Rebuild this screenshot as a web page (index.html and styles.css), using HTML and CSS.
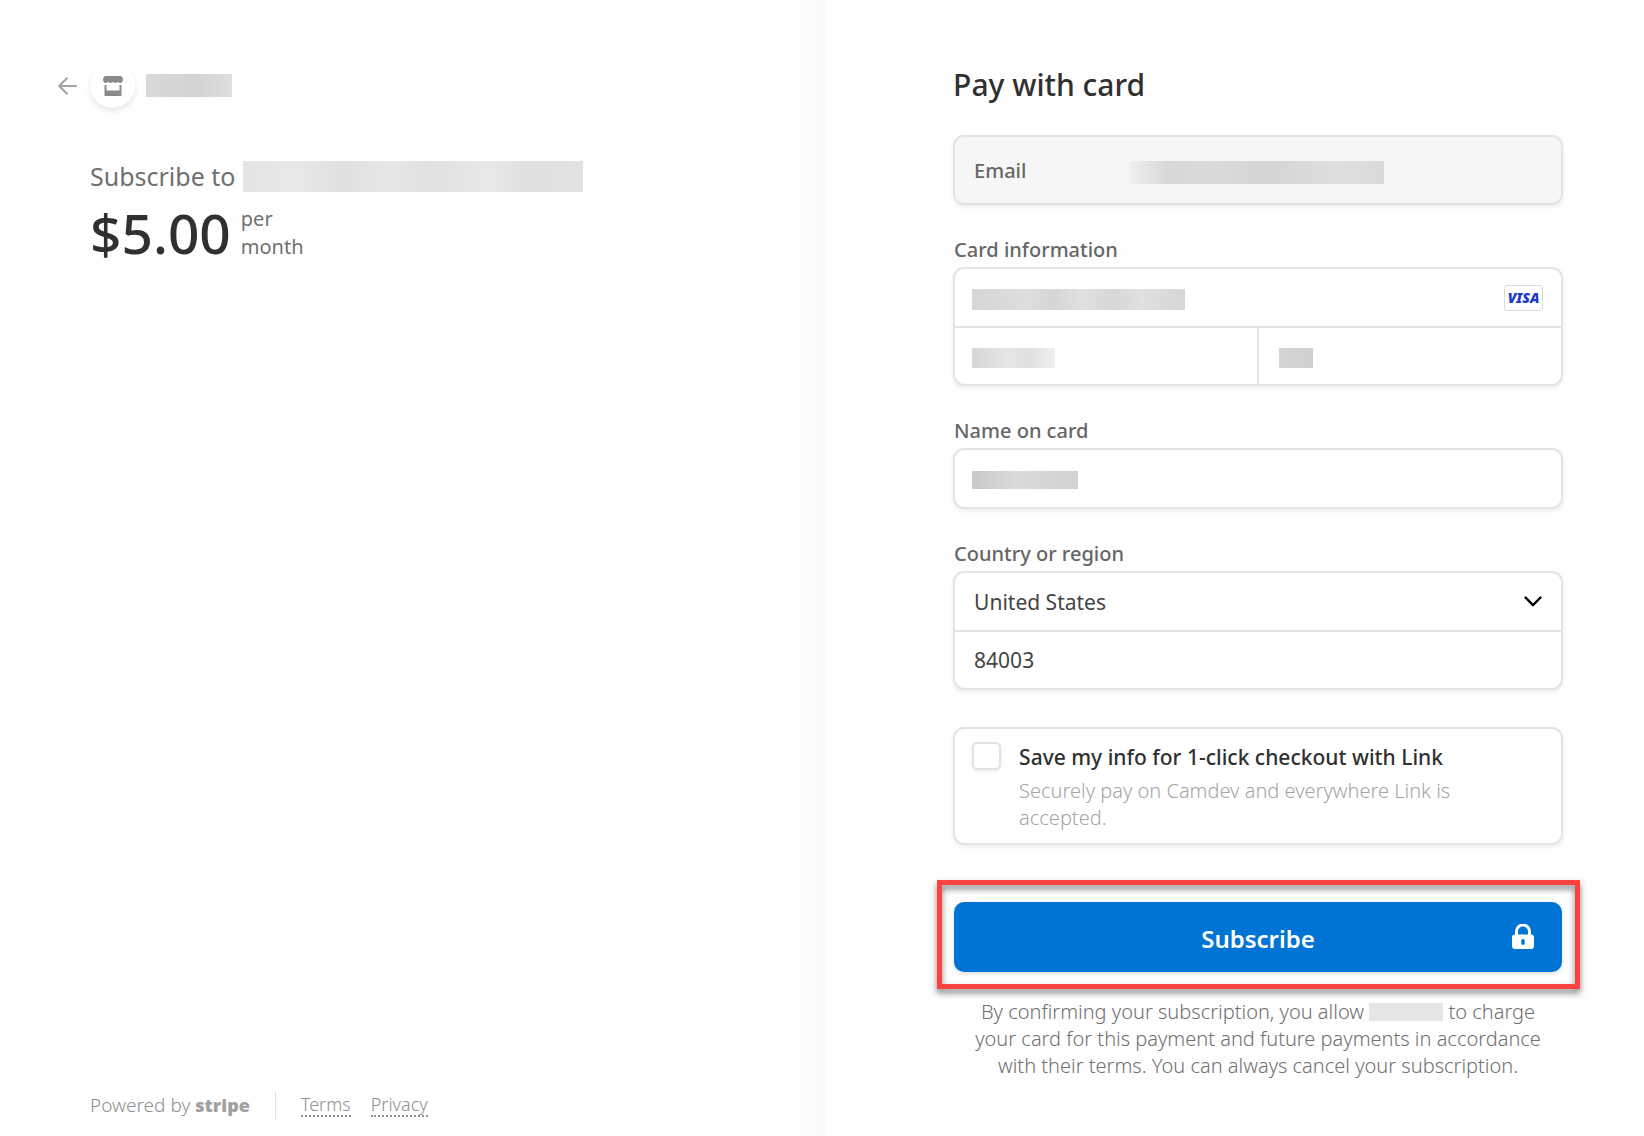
FILE: index.html
```html
<!DOCTYPE html>
<html lang="en">
<head>
  <meta charset="UTF-8" />
  <meta name="viewport" content="width=device-width, initial-scale=1.0"/>
  <title>Subscribe - Checkout</title>
  <link rel="stylesheet" href="styles.css">
</head>
<body>
  <div class="checkout">
    <section class="summary">
      <header class="business">
        <a class="back" href="#" aria-label="Back">
          <svg width="20" height="18" viewBox="0 0 20 18" fill="none" stroke="#a3a3a3" stroke-width="2" stroke-linecap="round" stroke-linejoin="round">
            <path d="M18 9H1.500M9 1.200L1.200 9L9 16.800"/>
          </svg>
        </a>
        <span class="store-icon">
          <svg width="20" height="20" viewBox="0 0 20 20" fill="#8a8a8a">
            <path d="M3 0h14c1.700 0 3 1.600 3 3.500S18.800 7 17.300 7c-1.300 0-1.900-.9-2.400-.9S13.800 7 12.500 7s-2-.9-2.500-.9S8.800 7 7.500 7s-1.900-.9-2.400-.9S4 7 2.700 7C1.200 7 0 5.400 0 3.500S1.300 0 3 0z"/>
            <path d="M1.500 9h2v5.500h13V9h2v11h-17z"/>
          </svg>
        </span>
        <span class="mask mask-business"></span>
      </header>

      <div class="product">
        <h1>Subscribe to <span class="mask mask-product"></span></h1>
        <div class="price">
          <span class="amount">$5.00</span>
          <span class="interval">per<br>month</span>
        </div>
      </div>

      <footer>
        <span class="powered">Powered by <strong>stripe</strong></span>
        <nav>
          <a href="#">Terms</a>
          <a href="#">Privacy</a>
        </nav>
      </footer>
    </section>

    <main class="payment">
      <form>
        <h2>Pay with card</h2>

        <div class="box email">
          <label for="email">Email</label>
          <input class="mask-email" id="email" type="email" readonly>
        </div>

        <div class="field">
          <label for="cardNumber">Card information</label>
          <div class="box">
            <div class="row">
              <input class="mask-number" id="cardNumber" type="text">
              <span class="visa">VISA</span>
            </div>
            <div class="row split">
              <input class="mask-expiry" type="text" aria-label="Expiration">
              <input class="mask-cvc" type="text" aria-label="CVC">
            </div>
          </div>
        </div>

        <div class="field">
          <label for="name">Name on card</label>
          <div class="box">
            <div class="row">
              <input class="mask-name" id="name" type="text">
            </div>
          </div>
        </div>

        <div class="field">
          <label for="country">Country or region</label>
          <div class="box">
            <div class="row">
              <select id="country">
                <option>United States</option>
              </select>
              <svg class="chevron" width="18" height="11" viewBox="0 0 18 11" fill="none" stroke="#000" stroke-width="2.400" stroke-linecap="round" stroke-linejoin="round">
                <path d="M1.500 1.500L9 9.200L16.500 1.500"/>
              </svg>
            </div>
            <div class="row">
              <input type="text" value="84003" aria-label="ZIP">
            </div>
          </div>
        </div>

        <div class="box save">
          <input id="saveInfo" type="checkbox">
          <div>
            <label for="saveInfo">Save my info for 1-click checkout with Link</label>
            <p>Securely pay on Camdev and everywhere Link is accepted.</p>
          </div>
        </div>

        <div class="submit">
          <button type="submit">
            Subscribe
            <svg class="lock" width="22" height="26" viewBox="0 0 22 26">
              <path d="M4.500 12V7.500a6.500 6.500 0 0 1 13 0V12" fill="none" stroke="#fff" stroke-width="3"/>
              <path fill="#fff" fill-rule="evenodd" d="M3 10.500h16a3 3 0 0 1 3 3V22a3 3 0 0 1-3 3H3a3 3 0 0 1-3-3v-8.500a3 3 0 0 1 3-3zM11 15a1.700 1.700 0 0 0-1.700 1.700v2.600a1.700 1.700 0 0 0 3.400 0v-2.600A1.700 1.700 0 0 0 11 15z"/>
            </svg>
          </button>
          <div class="highlight"></div>
        </div>

        <p class="terms">By confirming your subscription, you allow <span class="mask mask-terms"></span> to charge your card for this payment and future payments in accordance with their terms. You can always cancel your subscription.</p>
      </form>
    </main>
  </div>
</body>
</html>
```
FILE: styles.css
```css
html, body {
  margin: 0;
  padding: 0;
  height: 100%;
  font-family: "Noto Sans", "Open Sans", sans-serif;
  font-size: 20px;
  background: #fefefe;
  color: #303030;
}

* {
  box-sizing: border-box;
}

h1, h2, p {
  margin: 0;
}

.checkout {
  display: grid;
  grid-template-columns: minmax(0, 101fr) minmax(0, 100fr);
  min-height: 100vh;
}

/* left side */

.summary {
  display: flex;
  flex-direction: column;
  padding: 63px 30px 17px 90px;
  background: linear-gradient(to left, #fafafa, #fefefe 32px);
}

.business {
  display: flex;
  align-items: center;
  margin-left: -32px;
}

.back {
  display: flex;
  width: 32px;
}

.store-icon {
  display: flex;
  align-items: center;
  justify-content: center;
  width: 45px;
  height: 45px;
  margin-right: 11px;
  border-radius: 50%;
  background: #fff;
  box-shadow: 0 3px 5px rgba(60, 66, 87, 0.12);
}

.mask {
  display: inline-block;
  background: #dcdcdc;
}

.mask-business {
  width: 86px;
  height: 23px;
  background: linear-gradient(to right, #d9d9d9, #d3d3d3 60%, #dfdfdf);
}

.mask-product {
  width: 340px;
  height: 31px;
  background: linear-gradient(to right, #e4e4e4, #e8e8e8 15%, #e0e0e0 30%, #e7e7e7 43%, #e1e1e1 55%, #e8e8e8 73%, #e0e0e0 82%, #e2e2e2);
}

.product {
  margin-top: 51px;
}

.product h1 {
  display: flex;
  align-items: center;
  gap: 8px;
  font-size: 25px;
  line-height: 34px;
  font-weight: 400;
  color: #707070;
}

.price {
  display: flex;
  align-items: center;
  gap: 10px;
  margin-top: 10px;
}

.amount {
  font-size: 55px;
  line-height: 60px;
  font-weight: 500;
}

.interval {
  font-size: 20px;
  line-height: 28px;
  color: #707070;
}

footer {
  display: flex;
  align-items: center;
  margin-top: auto;
  font-size: 18px;
  line-height: 28px;
  font-weight: 300;
  color: #909090;
}

.powered {
  padding-right: 25px;
  border-right: 1px solid #e0e0e0;
  font-size: 19px;
}

.powered strong {
  font-size: 18px;
  font-weight: 900;
  color: #a0a0a0;
}

footer nav {
  display: flex;
  gap: 20px;
  padding-left: 25px;
}

footer a {
  line-height: 22px;
  color: #909090;
  text-decoration: none;
  border-bottom: 2px dotted #909090;
}

/* right side */

.payment {
  padding: 65px 81px 40px 127px;
}

.payment h2 {
  margin-bottom: 30px;
  font-size: 30px;
  line-height: 40px;
  font-weight: 500;
}

.box {
  border: 2px solid #e4e4e4;
  border-radius: 11px;
  background: #fff;
  box-shadow: 0 2px 4px rgba(0, 0, 0, 0.07);
  overflow: hidden;
}

.field {
  display: flex;
  flex-direction: column;
  gap: 4px;
  margin-top: 31px;
}

.field label {
  padding-left: 1px;
  line-height: 27px;
  font-weight: 500;
  color: #666;
}

.email {
  display: flex;
  align-items: center;
  height: 70px;
  padding-left: 19px;
  background: #f6f6f6;
}

.email label {
  width: 139px;
  font-weight: 500;
  color: #666;
}

.row {
  display: flex;
  align-items: center;
  height: 57px;
}

.row + .row {
  height: 58px;
  border-top: 2px solid #e4e4e4;
}

.box input[type="text"],
.box input[type="email"],
.box select {
  flex: 1;
  min-width: 0;
  height: 100%;
  margin: 0;
  padding: 0 19px;
  border: none;
  outline: none;
  appearance: none;
  background-color: transparent;
  background-repeat: no-repeat;
  background-position: 17px 55%;
  font: inherit;
  font-size: 21px;
  color: #444;
}

.box .split .mask-cvc {
  border-left: 2px solid #e4e4e4;
  background-position: 20px 55%;
}

.mask-email {
  background-image: linear-gradient(to right, #efefef, #d8d8d8 15%, #dbdbdb 32%, #d5d5d5 55%, #dfdfdf 82%, #dadada);
  background-size: 254px 23px;
}

.mask-number {
  background-image: linear-gradient(to right, #d6d6d6, #dedede 26%, #d6d6d6 38%, #e0e0e0 52%, #d7d7d7 66%, #e0e0e0 80%, #d6d6d6);
  background-size: 213px 21px;
}

.mask-expiry {
  background-image: linear-gradient(to right, #d6d6d6, #e6e6e6 45%, #e0e0e0 68%, #f0f0f0);
  background-size: 83px 20px;
}

.mask-cvc {
  background-image: linear-gradient(to right, #d5d5d5, #cfcfcf);
  background-size: 34px 20px;
}

.mask-name {
  background-image: linear-gradient(to right, #c9c9c9, #dadada 42%, #d2d2d2);
  background-size: 106px 18px;
}

.visa {
  width: 39px;
  height: 26px;
  margin-right: 18px;
  border: 1px solid #d8dade;
  border-radius: 3px;
  font-size: 14px;
  line-height: 24px;
  font-weight: 900;
  font-style: italic;
  text-align: center;
  color: #2038c8;
}

.chevron {
  margin-right: 19px;
}

.save {
  display: flex;
  gap: 18px;
  height: 118px;
  margin-top: 37px;
  padding: 13px 60px 0 17px;
}

.save input {
  flex: none;
  width: 29px;
  height: 28px;
  margin: 0;
  appearance: none;
  border: 2px solid #e2e2e2;
  border-radius: 5px;
  background: #fff;
  box-shadow: 0 2px 4px rgba(0, 0, 0, 0.06);
}

.save label {
  display: block;
  font-size: 21px;
  line-height: 30px;
  font-weight: 500;
}

.save p {
  margin-top: 5px;
  line-height: 27px;
  font-weight: 300;
  color: #a5a5a5;
}

.submit {
  position: relative;
  margin: 57px 1px 0;
}

button {
  position: relative;
  display: block;
  width: 100%;
  height: 70px;
  padding: 2px 0 0;
  border: none;
  border-radius: 10px;
  background: #0074d4;
  box-shadow: 0 2px 4px rgba(0, 0, 0, 0.12);
  font: inherit;
  font-size: 24px;
  font-weight: 600;
  color: #fff;
}

.lock {
  position: absolute;
  top: 22px;
  right: 28px;
}

/* red callout around the button */
.highlight {
  position: absolute;
  inset: -22px -18px -17px -17px;
  border: 5px solid #fb4142;
  filter: drop-shadow(0 4px 3px rgba(0, 0, 0, 0.5));
  pointer-events: none;
}

.terms {
  margin-top: 26px;
  padding: 0 10px;
  line-height: 27px;
  font-weight: 300;
  text-align: center;
  color: #707070;
}

.mask-terms {
  width: 74px;
  height: 18px;
  background: #e6e6e6;
  vertical-align: -2px;
}

@media (max-width: 1000px) {
  .checkout {
    grid-template-columns: 1fr;
  }

  .payment {
    padding: 40px 30px;
  }
}
```
